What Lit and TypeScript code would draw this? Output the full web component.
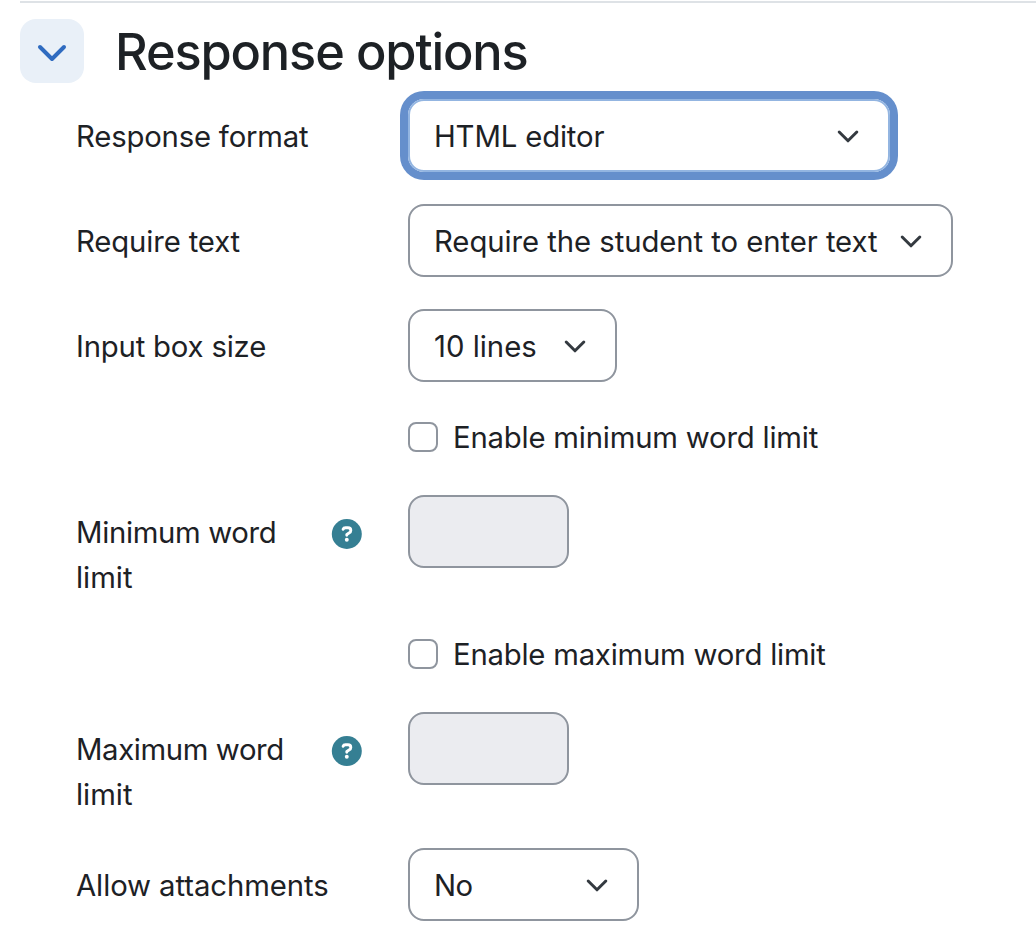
import { LitElement, html, css, svg } from "lit";
import { customElement } from "lit/decorators.js";

interface Row {
  kind: "select" | "check" | "text";
  label: string;
  labelFit: string;
  value?: string;
  valueFit?: string;
  size?: string;
}

const rows: Row[] = [
  { kind: "select", label: "Response format", labelFit: "t1", value: "HTML editor", valueFit: "v1", size: "format" },
  { kind: "select", label: "Require text", labelFit: "t2", value: "Require the student to enter text", valueFit: "v2", size: "require" },
  { kind: "select", label: "Input box size", labelFit: "t3", value: "10 lines", valueFit: "v3", size: "lines" },
  { kind: "check", label: "Enable minimum word limit", labelFit: "t4" },
  { kind: "text", label: "Minimum word limit", labelFit: "t5" },
  { kind: "check", label: "Enable maximum word limit", labelFit: "t6" },
  { kind: "text", label: "Maximum word limit", labelFit: "t7" },
  { kind: "select", label: "Allow attachments", labelFit: "t8", value: "No", valueFit: "v8", size: "attach" },
];

const chevron = html`<svg class="chevron" viewBox="0 0 24 24" width="24" height="24">
  ${svg`<path d="M3.2 8 L12 16.8 L20.8 8" fill="none" stroke="#343a40" stroke-width="3" stroke-linecap="round" stroke-linejoin="round"/>`}
</svg>`;

@customElement("app-root")
export class AppRoot extends LitElement {
  static styles = css`
    :host {
      display: block;
      height: 946px;
      overflow: hidden;
      background: #fff;
      color: #1d2125;
      font: 400 29.3px/45px Inter, "Liberation Sans", sans-serif;
    }
    .section { margin: 1px 0 0 20px; border-top: 2px solid #dee2e6; padding-top: 16px; }
    .head { display: flex; align-items: center; height: 64px; gap: 32px; }
    .toggle {
      width: 64px; height: 64px; border-radius: 16px; background: #e9f0f8; color: #2f6bc0;
      display: grid; place-items: center;
    }
    h3 {
      margin: 0 0 0 -1px; padding-top: 2px; font-size: 50.5px; line-height: 60px;
      font-weight: 500; white-space: nowrap; letter-spacing: -1.15px;
    }
    .form { padding: 16px 0 0 56px; display: flex; flex-direction: column; }
    .row { display: grid; grid-template-columns: 255px 77px auto; justify-content: start; align-items: start; }
    .select { height: 73px; margin-bottom: 32px; }
    .check { height: 45px; margin-bottom: 36px; }
    .text { height: 105px; margin-bottom: 31px; }
    .label { padding-top: 15px; }
    .select .label { white-space: nowrap; }
    .field {
      box-sizing: border-box; height: 73px; border: 2px solid #8f959e; border-radius: 16px;
      display: flex; align-items: center; justify-content: space-between;
      padding: 2px 28px 0 24px; white-space: nowrap; grid-column: 3;
    }
    .field .chevron { margin-top: -2px; }
    .format { width: 482px; border-color: #93b5e1; box-shadow: 0 0 0 8px #658fcc; }
    .require { width: 545px; }
    .lines { width: 209px; }
    .attach { width: 231px; }
    .disabled { width: 161px; background: #ebecf0; }
    .option { grid-column: 3; height: 45px; display: flex; align-items: center; gap: 15px; white-space: nowrap; }
    .option .caption { padding-top: 2px; }
    .box { box-sizing: border-box; width: 30px; height: 30px; border: 2px solid #8f959e; border-radius: 8px; }
    .help { padding-top: 24px; display: flex; }
    .chevron { display: block; }
    .t1, .t3 { letter-spacing: -0.19px; }
    .t2 { letter-spacing: -0.13px; }
    .t4 { letter-spacing: -0.2px; }
    .t5::first-line { letter-spacing: -0.33px; }
    .t6 { letter-spacing: -0.22px; }
    .t7::first-line { letter-spacing: -0.38px; }
    .t8 { letter-spacing: -0.09px; }
    .v1 { letter-spacing: -0.15px; }
    .v2 { letter-spacing: -0.06px; }
    .v8 { letter-spacing: -0.5px; }
  `;

  private help() {
    return html`<svg width="32" height="30" viewBox="0 0 32 30">
      ${svg`<circle cx="15.8" cy="15" r="15" fill="#357f93"/>
      <path d="M12.1 10.3 Q12.6 8.8 14.5 8.8 H16.9 Q19.8 8.9 19.8 11.4 Q19.8 13 18 14.1 L15.8 15.4 V16.2" fill="none" stroke="#fff" stroke-width="2.9" stroke-linecap="round" stroke-linejoin="round"/>
      <circle cx="15.8" cy="20.8" r="1.95" fill="#fff"/>`}
    </svg>`;
  }

  private row(r: Row) {
    if (r.kind === "check")
      return html`<div class="row check"><div class="option"><span class="box"></span><span class="caption ${r.labelFit}">${r.label}</span></div></div>`;
    if (r.kind === "text")
      return html`<div class="row text"><div class="label ${r.labelFit}">${r.label}</div><div class="help">${this.help()}</div><div class="field disabled"></div></div>`;
    return html`<div class="row select"><div class="label ${r.labelFit}">${r.label}</div><div class="field ${r.size}"><span class=${r.valueFit}>${r.value}</span>${chevron}</div></div>`;
  }

  render() {
    return html`<div class="section">
      <div class="head">
        <div class="toggle"><svg width="32" height="32" viewBox="0 0 32 32">${svg`<path d="M4 12 L16 24 L28 12" fill="none" stroke="currentColor" stroke-width="4" stroke-linecap="round" stroke-linejoin="round"/>`}</svg></div>
        <h3>Response options</h3>
      </div>
      <div class="form">${rows.map((r) => this.row(r))}</div>
    </div>`;
  }
}
